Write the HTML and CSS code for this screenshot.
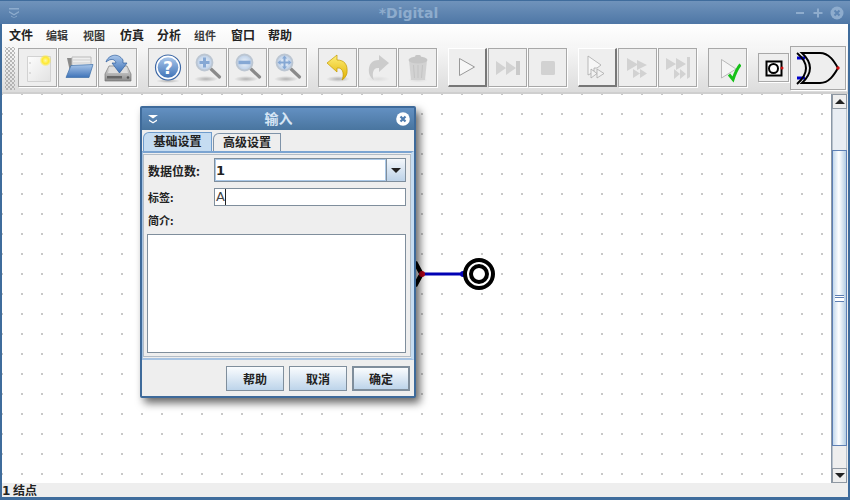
FILE: index.html
```html
<!doctype html>
<html>
  <head>
    <meta charset="utf-8">
    <title>*Digital</title>
    <link rel="stylesheet" href="styles.css">
  </head>
  <body>
    <svg class="defs" width="0" height="0">
      <defs>
        <linearGradient id="blue" x1="0" y1="0" x2="0" y2="1"><stop offset="0" stop-color="#a9c6ea"/><stop offset="1" stop-color="#3f73b8"/></linearGradient>
        <linearGradient id="page" x1="0" y1="0" x2="1" y2="1"><stop offset="0" stop-color="#fdfdfd"/><stop offset="1" stop-color="#e2e2e2"/></linearGradient>
        <linearGradient id="drive" x1="0" y1="0" x2="0" y2="1"><stop offset="0" stop-color="#e6e6e6"/><stop offset="1" stop-color="#8a8a8a"/></linearGradient>
        <radialGradient id="star"><stop offset="0" stop-color="#fff8a0"/><stop offset=".55" stop-color="#ffe930"/><stop offset="1" stop-color="#ffe930" stop-opacity="0"/></radialGradient>
        <radialGradient id="lens"><stop offset="0" stop-color="#eef3fa"/><stop offset="1" stop-color="#b9cde6"/></radialGradient>
        <linearGradient id="yellow" x1="0" y1="0" x2="0" y2="1"><stop offset="0" stop-color="#fff07a"/><stop offset="1" stop-color="#e0b000"/></linearGradient>
        <radialGradient id="shadow"><stop offset="0" stop-color="#000" stop-opacity=".25"/><stop offset="1" stop-color="#000" stop-opacity="0"/></radialGradient>
      </defs>
    </svg>
    <div class="window">
      <div class="titlebar">
        <svg class="title-menu" width="10" height="10" viewBox="0 0 10 10"><path d="M0 0h10v1.500H0z M0 3l5 3 5-3v1.500L5 7.500 0 4.500z M2 7.500l3 2 3-2v1L5 10 2 8.500z" fill="#8eaccd"/></svg>
        <span class="title-text">*Digital</span>
        <span class="title-btns">
          <svg width="12" height="12" viewBox="0 0 12 12"><path d="M2 5h8v2H2z" fill="#8eaccd"/></svg>
          <svg width="12" height="12" viewBox="0 0 12 12"><path d="M5 1.500h2V5h3.500v2H7v3.500H5V7H1.500V5H5z" fill="#8eaccd"/></svg>
          <svg width="14" height="14" viewBox="0 0 14 14"><circle cx="7" cy="7" r="6.500" fill="#8eaccd"/><path d="M4.500 4.500l5 5M9.500 4.500l-5 5" stroke="#5f86b3" stroke-width="2"/></svg>
        </span>
      </div>
      <div class="menubar">
        <span class="menu-item">文件</span>
        <span class="menu-item thin">编辑</span>
        <span class="menu-item thin">视图</span>
        <span class="menu-item">仿真</span>
        <span class="menu-item">分析</span>
        <span class="menu-item thin">组件</span>
        <span class="menu-item">窗口</span>
        <span class="menu-item">帮助</span>
      </div>
      <div class="toolbar">
        <div class="gripper"></div>
        <div class="tool-group">
          <button class="tool"><svg width="30" height="32" viewBox="0 0 30 32"><path d="M4.500 4.500h23v25h-23z" fill="url(#page)" stroke="#d2d2d2"/><circle cx="7" cy="11" r=".7" fill="#b5b5b5"/><circle cx="7" cy="21" r=".7" fill="#b5b5b5"/><circle cx="22.500" cy="8.500" r="6" fill="url(#star)"/></svg></button>
          <button class="tool"><svg width="32" height="30" viewBox="0 0 32 30"><path d="M5 5h7l1 2v16H9z" fill="#8a8a8a"/><path d="M10 4h19v11H10z" fill="#eee" stroke="#bbb"/><path d="M11 7h17M11 10h17" stroke="#cfcfcf"/><path d="M9 12.500l22-1-4 13H4z" fill="url(#blue)" stroke="#3c6ea8" stroke-width=".7"/></svg></button>
          <button class="tool"><svg width="30" height="32" viewBox="0 0 30 32"><path d="M6 14h18l4 8v7H2v-7z" fill="url(#drive)" stroke="#777" stroke-width=".7"/><path d="M7 15h16l2 6H5z" fill="#dedede"/><rect x="4" y="24" width="15" height="2.500" fill="#666"/><circle cx="25" cy="25.500" r="1.300" fill="#555"/><path d="M3 10C5 3 15 0 20 8v3h4l-7.500 10L9 11h4C12 7 8 6 3 10z" fill="url(#blue)" stroke="#2f5f9e" stroke-width=".7"/></svg></button>
        </div>
        <div class="tool-group">
          <button class="tool"><svg width="30" height="30" viewBox="0 0 30 30"><ellipse cx="15" cy="28" rx="12" ry="2" fill="url(#shadow)"/><circle cx="15" cy="14.500" r="12.500" fill="#fff" stroke="#3d68a6" stroke-width="1.200"/><circle cx="15" cy="14.500" r="10.300" fill="url(#blue)"/><text x="15" y="21" class="help-mark">?</text></svg></button>
          <button class="tool"><svg width="30" height="32" viewBox="0 0 30 32"><ellipse cx="13" cy="27" rx="12" ry="3" fill="url(#shadow)"/><path d="M18 17l8.500 8" stroke="#8a8a8a" stroke-width="3.200" stroke-linecap="round"/><circle cx="11.500" cy="10.500" r="8" fill="url(#lens)" stroke="#bcc6d2" stroke-width="1.800"/><path d="M10 5.500h3V9h3.500v3H13v3.500h-3V12H6.500V9H10z" fill="#86a8d4"/></svg></button>
          <button class="tool"><svg width="30" height="32" viewBox="0 0 30 32"><ellipse cx="13" cy="27" rx="12" ry="3" fill="url(#shadow)"/><path d="M18 17l8.500 8" stroke="#8a8a8a" stroke-width="3.200" stroke-linecap="round"/><circle cx="11.500" cy="10.500" r="8" fill="url(#lens)" stroke="#bcc6d2" stroke-width="1.800"/><path d="M5.500 8.700h12v3.500h-12z" fill="#86a8d4"/></svg></button>
          <button class="tool"><svg width="30" height="32" viewBox="0 0 30 32"><ellipse cx="13" cy="27" rx="12" ry="3" fill="url(#shadow)"/><path d="M18 17l8.500 8" stroke="#8a8a8a" stroke-width="3.200" stroke-linecap="round"/><circle cx="11.500" cy="10.500" r="8" fill="url(#lens)" stroke="#bcc6d2" stroke-width="1.800"/><path d="M11.500 3.500l2.500 3h-1.500v3h3V8l3 2.500-3 2.500v-1.500h-3v3H14l-2.500 3-2.500-3h1.500v-3h-3V13l-3-2.500 3-2.500v1.500h3v-3H9z" fill="#86a8d4"/></svg></button>
        </div>
        <div class="tool-group">
          <button class="tool"><svg width="30" height="32" viewBox="0 0 30 32"><ellipse cx="15" cy="27" rx="12" ry="3" fill="url(#shadow)"/><path d="M4 11L14 3v5c7 0 11 4 10 13-.500 3-3 6-5 7 2-4 2-13-5-12v4z" fill="url(#yellow)" stroke="#c49a00" stroke-width=".7"/></svg></button>
          <button class="tool"><svg width="30" height="32" viewBox="0 0 30 32"><ellipse cx="15" cy="27" rx="12" ry="3" fill="url(#shadow)" opacity=".3"/><path d="M26 11L16 3v5C9 8 5 12 6 21c.500 3 3 6 5 7-2-4-2-13 5-12v4z" fill="#cccccc"/></svg></button>
          <button class="tool"><svg width="30" height="32" viewBox="0 0 30 32"><ellipse cx="15" cy="28" rx="10" ry="2.500" fill="url(#shadow)" opacity=".3"/><path d="M6 8h18l-2 20H8z" fill="#d2d2d2"/><ellipse cx="15" cy="8" rx="9.500" ry="3.500" fill="#c6c6c6"/><rect x="12" y="3" width="6" height="3" rx="1.500" fill="#c6c6c6"/><path d="M10.500 13l1 13M15 13v13M19.500 13l-1 13" stroke="#c4c4c4"/></svg></button>
        </div>
        <div class="tool-group">
          <button class="tool raised"><svg width="18" height="20" viewBox="0 0 18 20"><path d="M1.500 1.500l15 8.500-15 8.500z" fill="#f7f7f7" stroke="#999"/></svg></button>
          <button class="tool"><svg width="26" height="16" viewBox="0 0 26 16"><path d="M1 1l10 7-10 7zM11 1l10 7-10 7z" fill="#d2d2d2"/><path d="M21 1h4v14h-4z" fill="#cacaca"/></svg></button>
          <button class="tool"><svg width="14" height="14" viewBox="0 0 14 14"><rect width="14" height="14" rx="1.500" fill="#d2d2d2"/></svg></button>
        </div>
        <div class="tool-group">
          <button class="tool raised"><svg width="22" height="24" viewBox="0 0 22 24"><path d="M2 1l13 9-4 3H8v3H6v2l-4 2z" fill="#f7f7f7" stroke="#aaa" stroke-width=".8"/><path d="M5 14l6 4.500L5 23zM11 14l7 4.500L11 23z" fill="#f2f2f2" stroke="#aaa" stroke-width=".8"/></svg></button>
          <button class="tool"><svg width="24" height="22" viewBox="0 0 24 22"><path d="M1 1l11 6.500L1 14zM11 3l10 5-10 5z M7 12l7 4.500L7 21zM14 12l7 4.500L14 21z" fill="#d2d2d2"/></svg></button>
          <button class="tool"><svg width="26" height="24" viewBox="0 0 26 24"><path d="M1 2l10 6-10 6zM11 2l10 6-10 6z M9 13l6 5-6 5zM15 13l6 5-6 5z" fill="#d2d2d2"/><path d="M22 1h3v20l-3 2z" fill="#d2d2d2"/></svg></button>
        </div>
        <div class="tool-group">
          <button class="tool"><svg width="26" height="30" viewBox="0 0 26 30"><path d="M6.500 6.500l14.500 9.500-14.500 9z" fill="#f5f5f5" stroke="#aaa" stroke-width=".8"/><path d="M14 21.500l4 5c2-6 4-11 7.500-15" fill="none" stroke="#16c018" stroke-width="3"/></svg></button>
        </div>
        <div class="tool-group">
          <button class="tool small"><svg width="24" height="20" viewBox="0 0 24 20"><rect x="4.500" y="3.500" width="15" height="14" fill="#fff" stroke="#000" stroke-width="2"/><circle cx="11.500" cy="10.500" r="4.500" fill="none" stroke="#000" stroke-width="2"/><circle cx="20" cy="10" r="1.500" fill="#d01010"/></svg></button>
          <button class="tool big"><svg width="54" height="42" viewBox="0 0 54 42"><path d="M6 11h8M6 31h8" stroke="#0000c8" stroke-width="3"/><path d="M6 6q18 15 0 31" fill="none" stroke="#000" stroke-width="2"/><path d="M11 6h18c9 0 14 8 18 15-4 7-9 15-18 15H11q16-15 0-30z" fill="none" stroke="#000" stroke-width="2"/><circle cx="47" cy="21" r="1.700" fill="#d01010"/></svg></button>
        </div>
      </div>
      <div class="main">
        <div class="canvas">
          <svg class="circuit" width="90" height="40" viewBox="0 0 90 40">
            <path d="M-1 4l6.500 12L-1 28" fill="none" stroke="#000" stroke-width="4.500"/>
            <path d="M6 16h40" stroke="#0000b4" stroke-width="3"/>
            <circle cx="6" cy="16" r="3" fill="#b00018"/>
            <circle cx="47" cy="16" r="3" fill="#0000b4"/>
            <circle cx="63" cy="16" r="14" fill="#fff" stroke="#000" stroke-width="4"/>
            <circle cx="63" cy="16" r="8" fill="#fff" stroke="#000" stroke-width="4"/>
          </svg>
        </div>
        <div class="scrollbar">
          <div class="scroll-btn"><span class="arrow-up"></span></div>
          <div class="track"></div>
          <div class="thumb"><span class="grip"></span></div>
          <div class="track short"></div>
          <div class="scroll-btn"><span class="arrow-down"></span></div>
        </div>
      </div>
      <div class="statusbar"><b class="count">1</b> 结点</div>
    </div>

    <div class="dialog">
      <div class="dialog-title">
        <svg width="10" height="10" viewBox="0 0 10 10"><path d="M0 1h10L5 4.500z M1 5.500l4 2.500 4-2.500V7L5 9.500 1 7z" fill="#fff"/></svg>
        <span class="dialog-name">输入</span>
        <svg width="14" height="14" viewBox="0 0 14 14"><circle cx="7" cy="7" r="6.800" fill="#fff"/><path d="M4.500 4.500l5 5M9.500 4.500l-5 5" stroke="#4f7cae" stroke-width="2.200"/></svg>
      </div>
      <div class="tabs">
        <span class="tab active">基础设置</span>
        <span class="tab">高级设置</span>
      </div>
      <div class="tab-panel">
        <div class="form">
          <div class="row">
            <label class="big-label">数据位数:</label>
            <div class="combo"><span class="combo-val">1</span><span class="combo-btn"><i class="arrow-down"></i></span></div>
          </div>
          <div class="row">
            <label class="thin-label">标签:</label>
            <div class="field">A<span class="caret"></span></div>
          </div>
          <label class="desc-label">简介:</label>
          <div class="area"></div>
        </div>
      </div>
      <div class="dialog-foot">
        <button class="btn">帮助</button>
        <button class="btn">取消</button>
        <button class="btn default">确定</button>
      </div>
    </div>
  </body>
</html>
```

FILE: styles.css
```css
html, body {
  margin: 0;
  padding: 0;
  width: 850px;
  height: 500px;
  overflow: hidden;
  font-family: "Noto Sans CJK SC", "DejaVu Sans", sans-serif;
  color: #222;
}
.defs {
  position: absolute;
}
.window {
  box-sizing: border-box;
  width: 850px;
  height: 500px;
  border: 2px solid #3f6c9c;
  border-top-width: 1px;
  border-bottom-width: 3px;
  display: flex;
  flex-direction: column;
  background: #eee;
}

/* title */
.titlebar {
  height: 23px;
  margin: 0 -2px;
  padding: 0 6px 0 9px;
  display: flex;
  align-items: center;
  justify-content: space-between;
  background: linear-gradient(#7093bb, #4e77a6);
  flex: none;
}
.title-text {
  font: bold 14px "DejaVu Sans", sans-serif;
  color: #8eaccd;
  margin-left: 4px;
}
.title-btns {
  display: flex;
  align-items: center;
  gap: 6px;
}

/* menu */
.menubar {
  height: 22px;
  padding-left: 7px;
  display: flex;
  align-items: center;
  background: linear-gradient(#ffffff, #f6f6f6);
  flex: none;
}
.menu-item {
  width: 37px;
  flex: none;
  font-size: 12px;
  font-weight: 700;
  line-height: 18px;
}
.menu-item.thin {
  font-size: 11px;
  color: #3a3a3a;
}

/* toolbar */
.toolbar {
  height: 48px;
  display: flex;
  align-items: center;
  gap: 11px;
  padding: 0 0 3px 16px;
  position: relative;
  background: linear-gradient(#f7f7f7, #dcdcdc);
  border-bottom: 2px solid #cfcfcf;
  box-sizing: border-box;
  flex: none;
}
.gripper {
  position: absolute;
  left: 3px;
  top: 1px;
  width: 10px;
  height: 43px;
  background:
    radial-gradient(circle, #a2a2a2 0.6px, transparent 1px) 0 0 / 4px 4px,
    radial-gradient(circle, #a2a2a2 0.6px, transparent 1px) 2px 2px / 4px 4px;
}
.tool-group {
  display: flex;
  align-items: center;
  gap: 1px;
}
.tool {
  box-sizing: border-box;
  width: 39px;
  height: 39px;
  padding: 0;
  display: flex;
  align-items: center;
  justify-content: center;
  background: #eee;
  border: 1px solid #a8a8a8;
  box-shadow: 1px 1px 0 #fff;
}
.tool.raised {
  border: 1px solid #fff;
  border-right: 2px solid #777;
  border-bottom: 2px solid #777;
  box-shadow: none;
}
.tool.small {
  width: 31px;
  height: 29px;
}
.tool.big {
  width: 56px;
  height: 44px;
  margin-top: 1px;
}
.help-mark {
  font: bold 17px "DejaVu Sans", sans-serif;
  fill: #fff;
  text-anchor: middle;
}

/* canvas */
.main {
  flex: 1;
  display: flex;
  min-height: 0;
}
.canvas {
  flex: 1;
  position: relative;
  background-color: #fff;
  background-image: conic-gradient(from 270deg at 2px 2px, #c8c8c8 25%, transparent 0);
  background-size: 20px 20px;
  background-position: -1px -1px;
  overflow: hidden;
}
.circuit {
  position: absolute;
  left: 414px;
  top: 164px;
}

/* scrollbar */
.scrollbar {
  width: 15px;
  margin-right: 1px;
  display: flex;
  flex-direction: column;
  background: #eee;
  border-left: 1px solid #8a97a6;
  flex: none;
}
.scroll-btn {
  height: 15px;
  display: flex;
  align-items: center;
  justify-content: center;
  border: 1px solid #8f98a2;
  box-sizing: border-box;
  background: #eee;
  flex: none;
}
.track {
  height: 41px;
  flex: none;
  background: #e8edf3;
  border-left: 1px solid #b8c2cc;
  border-right: 1px solid #b8c2cc;
}
.track.short {
  height: 22px;
  background: #eee;
}
.thumb {
  flex: 1;
  display: flex;
  align-items: center;
  justify-content: center;
  border: 1px solid #5e80b4;
  background: linear-gradient(90deg, #c3d8ec, #fff 45%, #b2cde4);
}
.grip {
  width: 9px;
  height: 5px;
  border-top: 1px solid #5e80b4;
  border-bottom: 1px solid #5e80b4;
  background: linear-gradient(#fff 0 1px, #5e80b4 1px 2px, #fff 2px);
}
.arrow-up, .arrow-down {
  display: block;
  width: 0;
  height: 0;
  border-left: 5px solid transparent;
  border-right: 5px solid transparent;
}
.arrow-up {
  border-bottom: 5px solid #222;
}
.arrow-down {
  border-top: 5px solid #222;
}

/* status */
.statusbar {
  height: 14px;
  flex: none;
  font-size: 12px;
  font-weight: 700;
  line-height: 14px;
  background: #eee;
}
.count {
  font: bold 12px "DejaVu Sans", sans-serif;
}

/* dialog */
.dialog {
  position: absolute;
  left: 140px;
  top: 106px;
  box-sizing: border-box;
  width: 276px;
  height: 292px;
  border: 2px solid #3e6a9a;
  border-radius: 2px;
  background: #eee;
  box-shadow: 4px 5px 9px rgba(0, 0, 0, 0.6);
  display: flex;
  flex-direction: column;
}
.dialog-title {
  height: 22px;
  flex: none;
  padding: 0 4px 0 6px;
  display: flex;
  align-items: center;
  justify-content: space-between;
  background: linear-gradient(#6390c2, #49759f);
}
.dialog-name {
  font-size: 14px;
  font-weight: 700;
  line-height: 20px;
  margin: 0 0 2px 3px;
  color: #d6e5f5;
}
.tabs {
  height: 21px;
  flex: none;
  padding: 3px 0 0 1px;
  box-sizing: border-box;
  display: flex;
  align-items: flex-end;
}
.tab {
  width: 68px;
  height: 18px;
  box-sizing: border-box;
  font-size: 12px;
  font-weight: 700;
  line-height: 16px;
  text-align: center;
  border: 1px solid #7f93a8;
  border-bottom: 0;
  border-radius: 6px 0 0 0;
}
.tab.active {
  width: 69px;
  height: 19px;
  margin-right: 1px;
  background: #c5dcf1;
  border-color: #6f9ccc;
}
.tab-panel {
  height: 209px;
  flex: none;
  box-sizing: border-box;
  border-top: 2px solid #7ba4d1;
  border-bottom: 2px solid #a7c3e2;
  border-left: 1px solid #a7c3e2;
  border-right: 3px solid #c5dcf1;
  background: #eee;
  padding: 1px 0;
}
.form {
  height: 100%;
  box-sizing: border-box;
  border: 1px solid #b2bcc6;
  padding: 3px 4px 3px 3px;
  display: flex;
  flex-direction: column;
}
.row {
  display: flex;
  align-items: center;
}
.row .big-label, .row .thin-label {
  width: 66px;
  margin-left: 1px;
  flex: none;
  font-weight: 700;
}
.big-label {
  font-size: 12px;
}
.thin-label, .desc-label {
  font-size: 11px;
}
.desc-label {
  margin: 6px 0 6px 1px;
  font-weight: 700;
  line-height: 16px;
}
.combo {
  width: 193px;
  height: 24px;
  box-sizing: border-box;
  border: 1px solid #7f8e9c;
  display: flex;
  background: #fff;
}
.combo-val {
  flex: 1;
  font: bold 13px/22px "DejaVu Sans", sans-serif;
  border: 1px solid #a9c7e6;
}
.combo-btn {
  width: 18px;
  flex: none;
  display: flex;
  align-items: center;
  justify-content: center;
  background: linear-gradient(#f3f7fb, #bcd2e8);
  border-left: 1px solid #7f8e9c;
}
.row + .row {
  margin-top: 6px;
}
.field {
  width: 192px;
  height: 18px;
  box-sizing: border-box;
  border: 1px solid #7f8e9c;
  background: #fff;
  font: 13px/16px "DejaVu Sans", sans-serif;
  color: #444;
  padding-left: 1px;
  display: flex;
}
.caret {
  width: 1px;
  height: 16px;
  background: #222;
}
.area {
  flex: 1;
  width: 259px;
  box-sizing: border-box;
  border: 1px solid #7f8e9c;
  background: #fff;
}
.dialog-foot {
  flex: 1;
  display: flex;
  justify-content: flex-end;
  align-items: flex-start;
  gap: 5px;
  padding: 6px 4px 0 0;
}
.btn {
  box-sizing: border-box;
  width: 58px;
  height: 25px;
  padding: 0;
  font-family: inherit;
  font-size: 12px;
  font-weight: 700;
  color: #222;
  background: linear-gradient(#fafcfe, #bdd4ea);
  border: 1px solid #7f8e9c;
}
.btn.default {
  border-width: 2px;
}
```
